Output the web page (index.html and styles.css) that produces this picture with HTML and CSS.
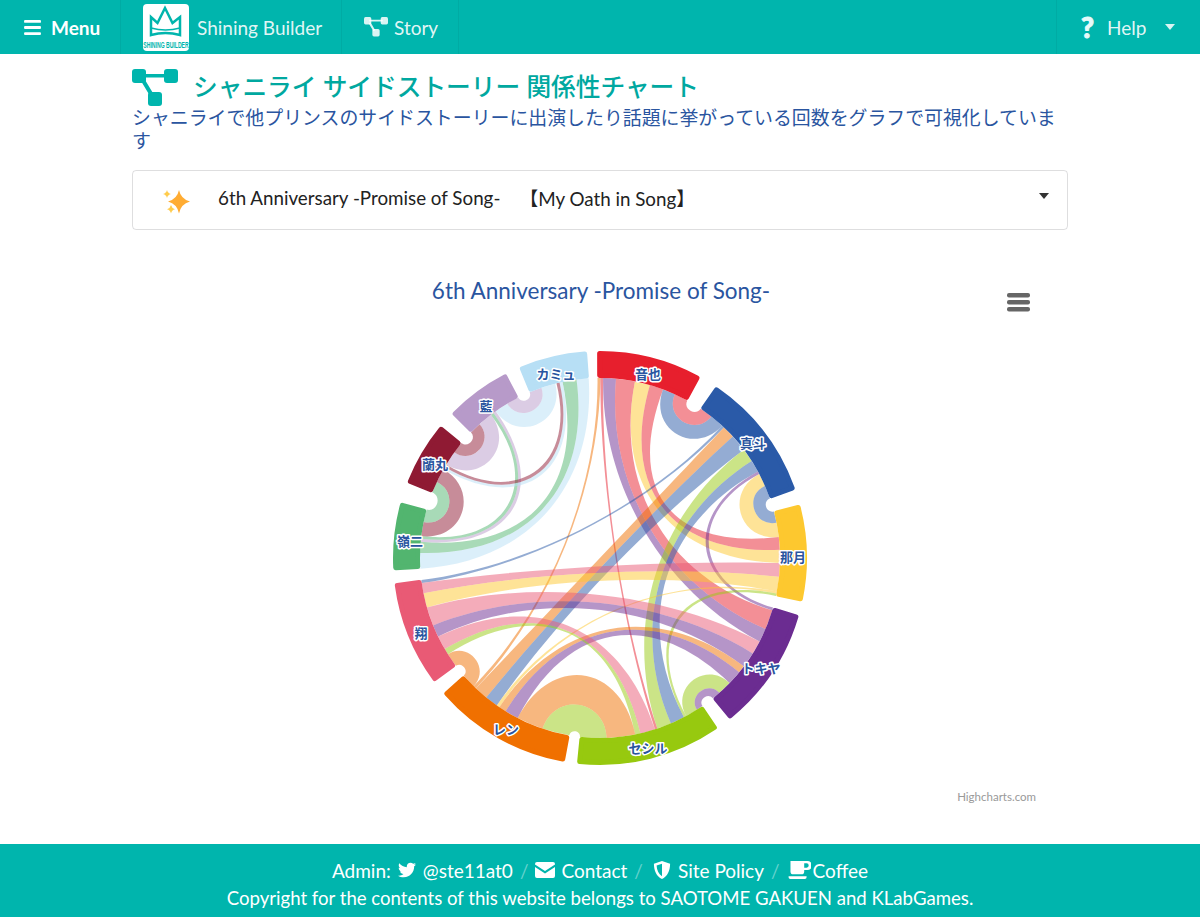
FILE: index.html
```html
<!DOCTYPE html>
<html lang="ja">
<head>
  <meta charset="UTF-8">
  <title>シャニライ サイドストーリー 関係性チャート</title>
  <link rel="stylesheet" href="styles.css">
</head>
<body>
  <nav class="topbar">
    <a class="item item-menu">
      <svg class="ico-bars" viewBox="0 0 18 16"><rect y="0" width="18" height="3" rx="1"/><rect y="6.5" width="18" height="3" rx="1"/><rect y="13" width="18" height="3" rx="1"/></svg>
      <span>Menu</span>
    </a>
    <a class="item item-brand">
      <svg class="logo" viewBox="0 0 46 47">
        <rect width="46" height="47" rx="4" fill="#fff"/>
        <path class="logo-line" d="M8 31V13l6.500 6L22 4l7.500 15 7.500-6v18q-14.500-4-29 0z"/>
        <path class="logo-line thin" d="M8 24q14.500 4 29 0"/>
        <text class="logo-text" transform="translate(23 44) scale(.6 1)">SHINING BUILDER</text>
      </svg>
      <span>Shining Builder</span>
    </a>
    <a class="item item-story">
      <svg class="ico-story" viewBox="0 0 46 38"><use href="#story"/></svg>
      <span>Story</span>
    </a>
    <a class="item item-help">
      <span class="help-mark">?</span>
      <span>Help</span>
      <i class="caret caret-white"></i>
    </a>
  </nav>

  <main class="content">
    <h1 class="page-title">
      <svg class="title-icon" viewBox="0 0 46 38"><g id="story"><rect x="0" y="0" width="14" height="14" rx="3"/><rect x="32" y="0" width="14" height="14" rx="3"/><rect x="16" y="23" width="14" height="14" rx="3"/><path d="M10 5h26v3.500H10zM9 12l3.500-2 9 15-3.500 2z"/></g></svg>
      <span>シャニライ サイドストーリー 関係性チャート</span>
    </h1>
    <p class="page-sub">シャニライで他プリンスのサイドストーリーに出演したり話題に挙がっている回数をグラフで可視化しています</p>

    <div class="select">
      <svg class="sparkle" viewBox="0 0 30 26">
        <path fill="#ffac33" d="M17 1q1.800 9 11 11.500-9.200 2.500-11 12-1.800-9.500-11-12 9.200-2.500 11-11.500z"/>
        <path fill="#ffcc4d" d="M5 1q.7 3.200 4 4-3.300.8-4 4-.7-3.200-4-4 3.300-.8 4-4zM9 16q.7 3.200 4 4.200-3.300.8-4 4.300-.7-3.500-4-4.300 3.300-1 4-4.200z"/>
      </svg>
      <span class="select-text">6th Anniversary -Promise of Song-</span>
      <span class="select-sub">【My Oath in Song】</span>
      <i class="caret caret-dark"></i>
    </div>

    <div class="chart" id="chart"></div>
  </main>

  <footer class="footer">
    <div class="foot-line foot-links">
      <span>Admin:</span>
      <svg class="foot-ico" viewBox="0 0 512 512"><path d="M459.370 151.716c.325 4.548.325 9.097.325 13.645 0 138.720-105.583 298.558-298.558 298.558-59.452 0-114.680-17.219-161.137-47.106 8.447.974 16.568 1.299 25.340 1.299 49.055 0 94.213-16.568 130.274-44.832-46.132-.975-84.792-31.188-98.112-72.772 6.498.974 12.995 1.624 19.818 1.624 9.421 0 18.843-1.300 27.614-3.573-48.081-9.747-84.143-51.980-84.143-102.985v-1.299c13.969 7.797 30.214 12.670 47.431 13.319-28.264-18.843-46.781-51.005-46.781-87.391 0-19.492 5.197-37.360 14.294-52.954 51.655 63.675 129.300 105.258 216.365 109.807-1.624-7.797-2.599-15.918-2.599-24.040 0-57.828 46.782-104.934 104.934-104.934 30.213 0 57.502 12.670 76.670 33.137 23.715-4.548 46.456-13.320 66.599-25.340-7.798 24.366-24.366 44.833-46.132 57.827 21.117-2.273 41.584-8.122 60.426-16.243-14.292 20.791-32.161 39.308-52.628 54.253z"/></svg>
      <span>@ste11at0</span>
      <span class="sep">/</span>
      <svg class="foot-ico" viewBox="0 0 20 16"><path d="M2 0h16a2 2 0 0 1 2 2v.500l-10 6.500L0 2.500V2a2 2 0 0 1 2-2zM0 5l10 6.500L20 5v9a2 2 0 0 1-2 2H2a2 2 0 0 1-2-2z"/></svg>
      <span>Contact</span>
      <span class="sep">/</span>
      <svg class="foot-ico ico-shield" viewBox="0 0 18 20"><path fill-rule="evenodd" d="M9 0l9 3c0 8-3 14-9 17C3 17 0 11 0 3zM9 3L3 5c.2 5 2.200 9.500 6 12z"/></svg>
      <span>Site Policy</span>
      <span class="sep">/</span>
      <svg class="foot-ico ico-cup" viewBox="0 0 22 19"><path fill-rule="evenodd" d="M2 0h18a3 3 0 0 1 0 9.500h-3.500V11a3 3 0 0 1-3 3H5a3 3 0 0 1-3-3zM16.500 2.500v4.500H19a2.200 2.200 0 0 0 0-4.500zM0 16h19v1.200a1.800 1.800 0 0 1-1.800 1.800H1.800A1.800 1.800 0 0 1 0 17.200z"/></svg>
      <span class="coffee">Coffee</span>
    </div>
    <div class="foot-line">Copyright for the contents of this website belongs to SAOTOME GAKUEN and KLabGames.</div>
  </footer>

  <script src="chart.js"></script>
</body>
</html>
```

FILE: styles.css
```css
* {
  box-sizing: border-box;
}
body {
  margin: 0;
  min-height: 917px;
  display: flex;
  flex-direction: column;
  background-color: #fff;
  font-family: Lato, "Noto Sans CJK JP", sans-serif;
  color: #222;
}

/* top menu */
.topbar {
  display: flex;
  align-items: stretch;
  height: 54px;
  background-color: #00b5ad;
  color: rgba(255, 255, 255, .9);
  font-size: 19px;
}
.item {
  display: flex;
  align-items: center;
  border-right: 1px solid rgba(0, 0, 0, .05);
}
.item-menu {
  width: 121px;
  padding-left: 24px;
  gap: 10px;
  font-weight: 700;
  color: #fff;
}
.ico-bars {
  width: 17px;
  height: 15px;
  fill: #fff;
}
.item-brand {
  width: 221px;
  padding-left: 22px;
  gap: 8px;
}
.logo {
  width: 46px;
  height: 47px;
}
.logo-line {
  fill: none;
  stroke: #00b5ad;
  stroke-width: 2.500;
}
.logo-line.thin {
  stroke-width: 1.500;
}
.logo-text {
  fill: #00b5ad;
  font: 700 8.500px "Liberation Sans", sans-serif;
  text-anchor: middle;
}
.item-story {
  width: 117px;
  padding-left: 22px;
  gap: 6px;
}
.ico-story {
  width: 24px;
  height: 20px;
  fill: rgba(255, 255, 255, .85);
}
.item-help {
  margin-left: auto;
  width: 144px;
  padding-left: 24px;
  border-right: 0;
  border-left: 1px solid rgba(0, 0, 0, .05);
}
.help-mark {
  width: 26px;
  font-size: 28px;
  font-weight: 900;
  color: #e6fafa;
  -webkit-text-stroke: 1px #e6fafa;
}
.caret {
  width: 0;
  height: 0;
  border-left: 5.500px solid transparent;
  border-right: 5.500px solid transparent;
}
.caret-white {
  margin-left: 19px;
  border-top: 6px solid rgba(255, 255, 255, .85);
}
.caret-dark {
  margin-left: auto;
  margin-right: 18px;
  margin-top: -8px;
  border-top: 6px solid #333;
}

/* page body */
.content {
  flex: 1;
  width: 936px;
  margin: 0 auto;
}
.page-title {
  display: flex;
  align-items: flex-start;
  gap: 15px;
  margin: 15px 0 0;
  height: 38px;
  font-size: 24.700px;
  font-weight: 500;
  line-height: 36px;
  color: #00a8a0;
}
.title-icon {
  width: 46px;
  height: 38px;
  fill: #00b5ad;
}
.page-sub {
  margin: -2px 0 0;
  font-size: 18.900px;
  line-height: 23px;
  color: #2a55a0;
  font-family: "Noto Sans CJK JP", sans-serif;
}
.select {
  display: flex;
  align-items: center;
  height: 60px;
  margin-top: 19px;
  padding-left: 29px;
  border: 1px solid rgba(34, 36, 38, .15);
  border-radius: 4px;
  font-size: 18.800px;
}
.sparkle {
  width: 30px;
  height: 26px;
  margin-top: 3px;
}
.select-text {
  margin-left: 26px;
  margin-top: -5px;
}
.select-sub {
  margin-left: 19px;
  margin-top: -5px;
}
.chart {
  margin-top: 20px;
  height: 594px;
}
.chart svg {
  display: block;
}
.chart-title {
  fill: #2a55a0;
  font: 22.500px Lato, sans-serif;
  text-anchor: middle;
}
.chart-credit {
  fill: #999;
  font: 11.500px Lato, sans-serif;
  text-anchor: end;
}
.chart-btn {
  fill: #666;
}
.node-label {
  fill: #2a55a0;
  font: 700 13px "Noto Sans CJK JP", sans-serif;
  text-anchor: middle;
  dominant-baseline: central;
  stroke: #fff;
  stroke-width: 3px;
  stroke-linejoin: round;
  paint-order: stroke;
}

/* footer */
.footer {
  height: 73px;
  padding-top: 12px;
  background-color: #00b5ad;
  color: #fff;
  font-size: 18.600px;
  text-align: center;
}
.foot-line {
  display: flex;
  justify-content: center;
  align-items: center;
  gap: 6px;
  height: 28px;
}
.foot-links {
  font-size: 19px;
}
.foot-ico {
  width: 20px;
  height: 18px;
  fill: #fff;
}
.ico-shield {
  margin-left: 2px;
}
.ico-cup {
  width: 24px;
}
.coffee {
  margin-left: -4px;
}
.sep {
  margin: 0 1px;
  color: rgba(255, 255, 255, .4);
}
```

FILE: chart.js
```js
// dependency wheel, drawn by hand since there is no chart library here
const NS = "http://www.w3.org/2000/svg";
const CX = 468, CY = 308, R = 180, R_OUT = 207;

const COLORS = {
  otoya: "#e71f2d", masato: "#2a5aa8", natsuki: "#fdc82f", tokiya: "#6b2c91",
  cecil: "#97c90f", ren: "#f07000", syo: "#e95a75", reiji: "#52b56f",
  ranmaru: "#8f1a33", ai: "#b79ac9", camus: "#b7dff5"
};

// name, colour, start and end angle (clockwise from top), label position
const nodes = [
  ["音也", "otoya", -0.8, 29, 648, 373],
  ["真斗", "masato", 34, 70.7, 753, 442],
  ["那月", "natsuki", 75, 102.2, 793, 556],
  ["トキヤ", "tokiya", 106, 141.2, 761, 667],
  ["セシル", "cecil", 145.3, 186.4, 648, 747],
  ["レン", "ren", 189.8, 229.2, 506, 728],
  ["翔", "syo", 233.2, 263, 421, 632],
  ["嶺二", "reiji", 266.6, 285.6, 410, 540],
  ["蘭丸", "ranmaru", 291.3, 309.7, 435, 463],
  ["藍", "ai", 314.2, 333, 486, 405],
  ["カミュ", "camus", 337, 356.4, 556, 373]
];

// colour, from a1..a2, to b1..b2
const links = [
  ["ren", -0.8, 0.1, 223.6, 224.6],
  ["otoya", 0.1, 1, 161.4, 162.2],
  ["tokiya", 1, 5.1, 113.2, 117.6],
  ["otoya", 5.1, 11.2, 106.9, 113.2],
  ["natsuki", 11.2, 16.1, 87.4, 91.6],
  ["otoya", 16.1, 20.5, 83.3, 87.4],
  ["masato", 20.5, 24.6, 38.2, 42.7],
  ["otoya", 24.6, 29, 34, 38.2],
  ["masato", 42.7, 43.5, 262, 263],
  ["ren", 43.5, 47.5, 219.2, 223.6],
  ["masato", 47.5, 53, 215, 219.2],
  ["cecil", 53, 57.4, 156.8, 161.4],
  ["masato", 57.4, 61.3, 152.2, 156.8],
  ["tokiya", 61.3, 62.2, 106, 106.9],
  ["natsuki", 62.2, 66.4, 78.7, 83.3],
  ["masato", 66.4, 70.7, 75, 78.7],
  ["syo", 91.6, 96, 258.7, 262],
  ["natsuki", 96, 100.7, 254, 258.7],
  ["natsuki", 100.7, 101.4, 214, 215],
  ["cecil", 101.4, 102.2, 151.4, 152.2],
  ["syo", 117.6, 122, 248, 254],
  ["tokiya", 122, 127, 244.1, 248],
  ["ren", 127, 129.4, 211.6, 214],
  ["tokiya", 129.4, 134, 207.2, 211.6],
  ["cecil", 134, 138.5, 147.4, 151.4],
  ["tokiya", 138.5, 141.2, 145.3, 147.4],
  ["syo", 162.2, 167, 239.6, 244.1],
  ["cecil", 167, 168.7, 237.7, 239.6],
  ["ren", 168.7, 177.9, 198.6, 207.2],
  ["cecil", 177.9, 186.4, 189.8, 198.6],
  ["ren", 224.6, 229.2, 233.2, 237.7],
  ["camus", 266.6, 271.6, 352.5, 356.4],
  ["reiji", 271.6, 275.2, 348, 352.5],
  ["ai", 275.2, 276.1, 323.7, 324.6],
  ["reiji", 276.1, 277, 322.7, 323.7],
  ["ranmaru", 277, 281.5, 295, 299.5],
  ["reiji", 281.5, 285.6, 291.3, 295],
  ["camus", 299.5, 300.4, 347, 348],
  ["ranmaru", 300.4, 301.3, 346, 347],
  ["ai", 301.3, 306, 318, 322.7],
  ["ranmaru", 306, 309.7, 314.2, 318],
  ["camus", 324.6, 329, 341, 345.6],
  ["ai", 329, 333, 337, 341]
];

function pt(deg, r) {
  const a = deg * Math.PI / 180;
  return (CX + r * Math.sin(a)).toFixed(2) + " " + (CY - r * Math.cos(a)).toFixed(2);
}

function el(name, attrs, parent) {
  const e = document.createElementNS(NS, name);
  for (const k in attrs) e.setAttribute(k, attrs[k]);
  parent.appendChild(e);
  return e;
}

// control point radius for one edge of a ribbon: close ends bend less
function cpRadius(p, q) {
  let dist = Math.abs(p - q);
  if (dist > 180) dist = 360 - dist;
  return R * (1 - 0.6 * Math.min(1, dist * Math.PI / 180));
}

function linkPath(a1, a2, b1, b2) {
  const c1 = cpRadius(a2, b1), c2 = cpRadius(b2, a1);
  return "M" + pt(a1, R) + "A" + R + " " + R + " 0 0 1 " + pt(a2, R) +
    "C" + pt(a2, c1) + " " + pt(b1, c1) + " " + pt(b1, R) +
    "A" + R + " " + R + " 0 0 1 " + pt(b2, R) +
    "C" + pt(b2, c2) + " " + pt(a1, c2) + " " + pt(a1, R) + "Z";
}

function nodePath(s, e) {
  // inset a bit, the round stroke gives the corners
  const inset = 0.7, r1 = R + 2.5, r2 = R_OUT - 2.5;
  s += inset; e -= inset;
  const big = e - s > 180 ? 1 : 0;
  return "M" + pt(s, r2) + "A" + r2 + " " + r2 + " 0 " + big + " 1 " + pt(e, r2) +
    "L" + pt(e, r1) + "A" + r1 + " " + r1 + " 0 " + big + " 0 " + pt(s, r1) + "Z";
}

const svg = el("svg", { width: 936, height: 594, viewBox: "0 0 936 594" }, document.getElementById("chart"));

el("text", { class: "chart-title", x: 469, y: 49 }, svg).textContent = "6th Anniversary -Promise of Song-";

// export menu button
[0, 7, 14].forEach(d => {
  el("rect", { class: "chart-btn", x: 875, y: 43 + d, width: 23, height: 4.5, rx: 2 }, svg);
});

links.forEach(l => {
  el("path", { d: linkPath(l[1], l[2], l[3], l[4]), fill: COLORS[l[0]], "fill-opacity": 0.5 }, svg);
});

nodes.forEach(n => {
  const c = COLORS[n[1]];
  el("path", { d: nodePath(n[2], n[3]), fill: c, stroke: c, "stroke-width": 5, "stroke-linejoin": "round" }, svg);
});

nodes.forEach(n => {
  el("text", { class: "node-label", x: n[4] - 132, y: n[5] - 250 }, svg).textContent = n[0];
});

el("text", { class: "chart-credit", x: 904, y: 551 }, svg).textContent = "Highcharts.com";
```
